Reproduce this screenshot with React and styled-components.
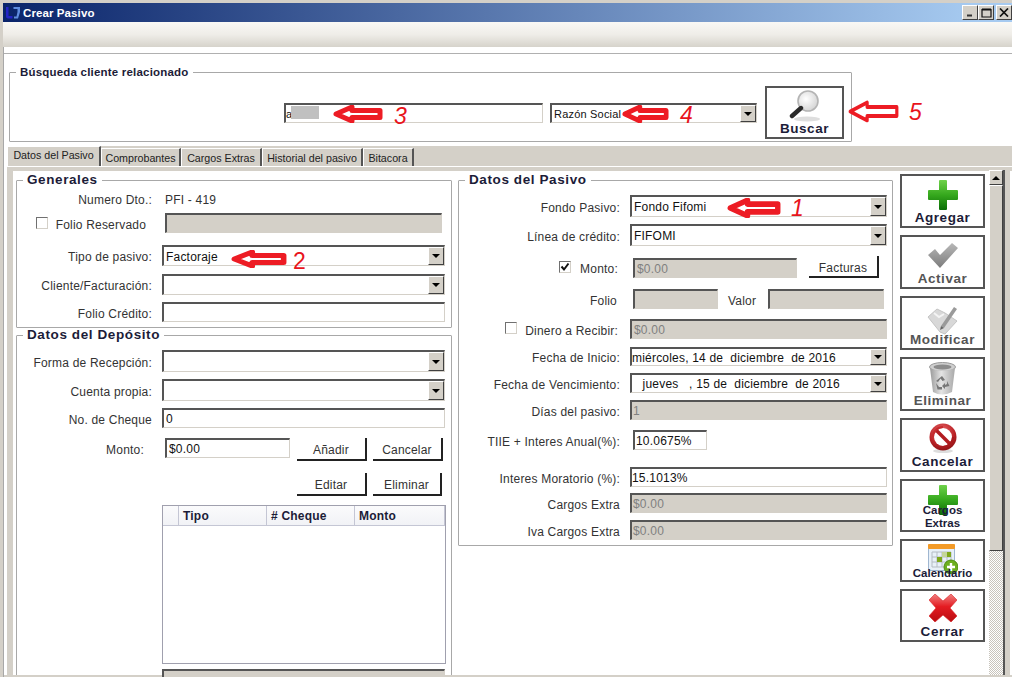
import React from "react";
import styled, { createGlobalStyle } from "styled-components";

const GlobalStyle = createGlobalStyle`
  html, body {
    margin: 0;
    padding: 0;
    background: #fff;
  }
  * {
    box-sizing: border-box;
  }
`;

const Window = styled.div`
  position: relative;
  width: 1012px;
  height: 677px;
  overflow: hidden;
  display: flex;
  flex-direction: column;
  padding-top: 3px;
  background: #d4d0c8;
  font-family: "Liberation Sans", Arial, sans-serif;
  font-size: 12px;
  letter-spacing: 0.2px;
  color: #333;
`;

const TitleBar = styled.div`
  flex: none;
  height: 19px;
  margin-left: 3px;
  display: flex;
  align-items: center;
  padding-left: 2px;
  background: linear-gradient(90deg, #0a246a 0%, #a6caf0 96%);
`;

const TitleText = styled.span`
  margin-left: 2px;
  color: #fff;
  font-weight: bold;
  font-size: 11.5px;
  letter-spacing: 0.1px;
`;

const WindowControls = styled.div`
  margin-left: auto;
  display: flex;
  align-items: center;
  height: 15px;
`;

const ControlButton = styled.div`
  width: 16px;
  height: 15px;
  margin-left: ${(p) => p.$ml || 0}px;
  display: flex;
  align-items: center;
  justify-content: center;
  background: #d4d0c8;
  border: 1px solid;
  border-color: #fff #404040 #404040 #fff;
`;

const Toolbar = styled.div`
  flex: none;
  height: 25px;
  margin-left: 3px;
  background: linear-gradient(180deg, #f9f8f5 0%, #efede8 50%, #d6d3cb 100%);
`;

const Client = styled.div`
  flex: 1;
  min-height: 0;
  margin-left: 3px;
  display: flex;
  flex-direction: column;
  background: #fff;
  border-left: 1px solid #a8a8a8;
`;

const TopRule = styled.div`
  flex: none;
  height: 7px;
  border-bottom: 1px solid #b0b0b0;
`;

const SearchSection = styled.div`
  flex: none;
  height: 92px;
  padding: 11px 0 0 5px;
`;

const Group = styled.fieldset`
  margin: 0;
  padding: 0;
  width: ${(p) => p.$w}px;
  height: ${(p) => p.$h}px;
  min-width: 0;
  border: 1px solid #a8a8a8;
  border-radius: 1px;
  flex: none;
`;

const Legend = styled.legend`
  margin-left: 6px;
  padding: 0 4px;
  height: 14px;
  line-height: 14px;
  font-weight: bold;
  font-size: ${(p) => p.$size || 13.5}px;
  letter-spacing: ${(p) => p.$ls || 0.6}px;
  color: #1c1c38;
`;

const SearchRow = styled.div`
  display: flex;
  align-items: flex-start;
  padding: 7px 0 0 274px;
`;

const Field = styled.div`
  position: relative;
  flex: none;
  width: ${(p) => p.$w}px;
  height: ${(p) => p.$h || 20}px;
  margin-left: ${(p) => p.$ml || 0}px;
  margin-top: ${(p) => p.$mt || 0}px;
  display: flex;
  align-items: center;
  padding: 1px 0 0 ${(p) => p.$pl ?? 2}px;
  white-space: pre;
  overflow: hidden;
  font-size: ${(p) => p.$size || 12}px;
  color: ${(p) => (p.$off ? "#808080" : "#111")};
  background: ${(p) => (p.$off ? "#d4d0c8" : "#fff")};
  border-style: solid;
  border-width: 2px 1px 1px 2px;
  border-color: #555 #d4d0c8 #d4d0c8 #555;
`;

const Redacted = styled.span`
  width: 28px;
  height: 13px;
  margin: -3px 0 0 -1px;
  background: #c0c0c0;
`;

const DropButton = styled.div`
  position: absolute;
  top: 0;
  right: 0;
  bottom: 0;
  width: 16px;
  display: flex;
  align-items: center;
  justify-content: center;
  background: #d4d0c8;
  border: 1px solid;
  border-color: #fff #404040 #404040 #fff;

  &::after {
    content: "";
    border-style: solid;
    border-width: 4px 4px 0 4px;
    border-color: #000 transparent transparent transparent;
  }
`;

const ActionButton = styled.div`
  flex: none;
  width: ${(p) => p.$w || 85}px;
  height: ${(p) => p.$h}px;
  margin-left: ${(p) => p.$ml || 0}px;
  display: flex;
  flex-direction: column;
  align-items: center;
  padding-top: ${(p) => p.$pt || 4}px;
  background: #fff;
  border: 2px solid #555;
  font-weight: bold;
  font-size: 13.5px;
  letter-spacing: 0.55px;
  line-height: 13px;
  text-align: center;
  color: ${(p) => (p.$off ? "#555" : "#1c1c38")};
`;

const ActionLabel = styled.span`
  position: relative;
  margin-top: ${(p) => p.$mt || 0}px;
  font-size: ${(p) => p.$size || 13.5}px;
  letter-spacing: ${(p) => (p.$size ? 0 : 0.55)}px;
`;

const TabArea = styled.div`
  flex: 1;
  min-height: 0;
  margin-left: 3px;
  display: flex;
  flex-direction: column;
  background: #d4d0c8;
`;

const TabStrip = styled.div`
  flex: none;
  height: 21px;
  display: flex;
  align-items: flex-end;
  border-bottom: 1px solid #fff;
`;

const Tab = styled.div`
  flex: none;
  width: ${(p) => p.$w}px;
  height: ${(p) => (p.$active ? 20 : 18)}px;
  padding: ${(p) => (p.$active ? "0 0 3px 0" : "1px 0 0 0")};
  display: flex;
  align-items: center;
  justify-content: center;
  white-space: nowrap;
  background: #d4d0c8;
  color: #222;
  font-size: 10.7px;
  letter-spacing: 0;
  border-style: solid;
  border-width: 1px 2px 0 1px;
  border-color: #fff #555 #fff #fff;
`;

const TabBody = styled.div`
  flex: 1;
  min-height: 0;
  margin-top: 4px;
  margin-left: 6px;
  display: flex;
  background: #fff;
`;

const Columns = styled.div`
  flex: none;
  display: flex;
  align-items: flex-start;
  padding: 2px 0 0 3px;
`;

const LeftColumn = styled.div`
  flex: none;
  width: 436px;
  margin-right: 6px;
  display: flex;
  flex-direction: column;
`;

const ButtonColumn = styled.div`
  flex: none;
  width: 85px;
  margin-left: 7px;
  padding-top: 1px;
  display: flex;
  flex-direction: column;
  gap: 7px;
`;

const Row = styled.div`
  display: flex;
  align-items: ${(p) => (p.$start ? "flex-start" : "center")};
  height: ${(p) => p.$h || 20}px;
  margin-top: ${(p) => p.$mt || 0}px;
`;

const Label = styled.div`
  flex: none;
  width: ${(p) => p.$w}px;
  display: flex;
  align-items: center;
  justify-content: flex-end;
  white-space: nowrap;
  padding-top: ${(p) => p.$pt ?? 3}px;
  padding-right: ${(p) => p.$pr || 0}px;
`;

const Check = styled.span`
  flex: none;
  width: 12px;
  height: 12px;
  margin-right: ${(p) => p.$mr || 8}px;
  margin-top: -5px;
  display: flex;
  align-items: center;
  justify-content: center;
  background: #fff;
  border-style: solid;
  border-width: 1px;
  border-color: #707070 #d4d0c8 #d4d0c8 #707070;
`;

const PlainValue = styled.span`
  margin-left: ${(p) => p.$ml || 0}px;
  padding-top: ${(p) => p.$pt || 0}px;
  flex: none;
`;

const FlatButton = styled.div`
  flex: none;
  width: ${(p) => p.$w || 70}px;
  height: ${(p) => p.$h || 23}px;
  margin-left: ${(p) => p.$ml || 0}px;
  margin-top: ${(p) => p.$mt || 0}px;
  display: flex;
  align-items: center;
  justify-content: center;
  padding-top: 3px;
  background: #fff;
  border-style: solid;
  border-width: 0 2px 2px 0;
  border-color: #222;
`;

const DepositGrid = styled.div`
  width: 284px;
  height: 159px;
  margin: 9px 0 0 145px;
  border: 1px solid #a0a0ae;
`;

const GridHead = styled.div`
  display: grid;
  grid-template-columns: 16px 88px 88px 90px;
  height: 20px;
  background: linear-gradient(180deg, #fbfbfc 0%, #f1f2f6 100%);
  border-bottom: 1px solid #c4c6d4;
`;

const GridCol = styled.div`
  display: flex;
  align-items: center;
  padding-left: 4px;
  border-right: 1px solid #c4c6d4;
  font-weight: bold;
  font-size: 12px;
  color: #1c1c38;
`;

const BottomField = styled(Field)`
  margin-top: 5px;
  margin-left: 145px;
`;

const ScrollBar = styled.div`
  flex: none;
  width: 16px;
  margin: -1px 0 0 4px;
  display: flex;
  flex-direction: column;
  border-right: 2px solid #555;
  background: repeating-conic-gradient(#c8c4bc 0 25%, #fff 0 50%) 0 0 / 2px 2px;
`;

const ScrollArrow = styled.div`
  flex: none;
  height: 15px;
  display: flex;
  align-items: center;
  justify-content: center;
  background: #d4d0c8;
  border: 1px solid;
  border-color: #fff #404040 #404040 #fff;

  &::after {
    content: "";
    border-style: solid;
    border-width: 0 4px 4px 4px;
    border-color: transparent transparent #000 transparent;
  }
`;

const ScrollThumb = styled.div`
  flex: none;
  height: 366px;
  background: #d4d0c8;
  border: 1px solid;
  border-color: #fff #404040 #404040 #fff;
`;

const EdgeStrip = styled.div`
  flex: 1;
  background: #d4d0c8;
  border-right: 2px solid #fff;
`;

const BottomLine = styled.div`
  flex: none;
  height: 2px;
  background: #d4d0c8;
`;

/* red annotations drawn on top of the capture */
const Mark = styled.svg`
  position: absolute;
  left: ${(p) => p.$x}px;
  top: ${(p) => p.$y}px;
`;

const MarkNumber = styled.span`
  position: absolute;
  left: ${(p) => p.$x}px;
  top: ${(p) => p.$y}px;
  font-size: 23px;
  line-height: 23px;
  font-style: ${(p) => (p.$upright ? "normal" : "italic")};
  letter-spacing: 0;
  color: #e8141c;
`;

const Arrow = ({ x, y, w, h, thin }) => (
  <Mark $x={x} $y={y} width={w} height={h} viewBox="0 0 50 18" preserveAspectRatio="none">
    <path
      d="M3 9 L19 2 L19 5.5 L47 5.5 L47 12.5 L19 12.5 L19 16 Z"
      fill="#fff"
      stroke="#ed1c24"
      strokeWidth={thin ? 3 : 5}
      strokeLinejoin="round"
    />
  </Mark>
);

const Shared = () => (
  <svg width="0" height="0" style={{ position: "absolute" }}>
    <defs>
      <linearGradient id="plusGreen" x1="0" y1="0" x2="0" y2="1">
        <stop offset="0" stopColor="#6fd24a" />
        <stop offset="0.5" stopColor="#35a81d" />
        <stop offset="1" stopColor="#0b6d06" />
      </linearGradient>
      <linearGradient id="grayMetal" x1="0" y1="0" x2="0" y2="1">
        <stop offset="0" stopColor="#b8b8b8" />
        <stop offset="1" stopColor="#7c7c7c" />
      </linearGradient>
      <linearGradient id="binBody" x1="0" y1="0" x2="1" y2="0">
        <stop offset="0" stopColor="#9a9a9a" />
        <stop offset="0.45" stopColor="#e4e4e4" />
        <stop offset="1" stopColor="#a8a8a8" />
      </linearGradient>
      <radialGradient id="redBall" cx="0.45" cy="0.3" r="0.8">
        <stop offset="0" stopColor="#e8686a" />
        <stop offset="0.6" stopColor="#bb2226" />
        <stop offset="1" stopColor="#7c0d10" />
      </radialGradient>
      <linearGradient id="redCross" x1="0" y1="0" x2="0" y2="1">
        <stop offset="0" stopColor="#f08080" />
        <stop offset="0.45" stopColor="#e41c22" />
        <stop offset="1" stopColor="#b80c10" />
      </linearGradient>
      <radialGradient id="lens" cx="0.4" cy="0.4" r="0.7">
        <stop offset="0" stopColor="#ffffff" />
        <stop offset="1" stopColor="#d0d0d0" />
      </radialGradient>
    </defs>
  </svg>
);

const PlusIcon = () => (
  <svg width="30" height="30" viewBox="0 0 30 30">
    <path
      d="M11 1 Q11 0 12 0 L18 0 Q19 0 19 1 L19 10 L29 10 Q30 10 30 11 L30 19 Q30 20 29 20 L19 20 L19 29 Q19 30 18 30 L12 30 Q11 30 11 29 L11 20 L1 20 Q0 20 0 19 L0 11 Q0 10 1 10 L11 10 Z"
      fill="url(#plusGreen)"
    />
  </svg>
);

const CheckIcon = () => (
  <svg width="30" height="26" viewBox="0 0 30 26">
    <path d="M0 12 L7 6 L12 12 L24 0 L30 5 L12 25 Z" fill="url(#grayMetal)" />
  </svg>
);

const EditIcon = () => (
  <svg width="32" height="31" viewBox="0 0 32 31">
    <path d="M1 13 L10 5 L18 9 L30 17 L18 30 L13 28 Z" fill="#d8d8d8" stroke="#c4c4c4" />
    <path d="M7 9 L12 13 L17 10" fill="none" stroke="#f4f4f4" strokeWidth="2" />
    <path d="M14 22 L27 3 L30 5 L17 24 Z" fill="#9a9a9a" />
    <path d="M14 22 L17 24 L13 26 Z" fill="#666" />
  </svg>
);

const TrashIcon = () => (
  <svg width="27" height="33" viewBox="0 0 27 33">
    <ellipse cx="13.5" cy="5" rx="13" ry="4.5" fill="#cfcfcf" stroke="#999" />
    <ellipse cx="13.5" cy="5" rx="9" ry="2.4" fill="#8c8c8c" />
    <path d="M1 6 L4 30 Q13 35 23 30 L26 6 Q13 12 1 6 Z" fill="url(#binBody)" />
    <path
      d="M13 14 L16 18 L13.5 19 L11.5 16.5 L9 20 L7 19 Z M18 19 L20.5 24 L16 25 L16 27 L13 24 L16 21 L16 23 L18 22 Z M7 21 L10 25 L13 25 L13 27.5 L8.5 27.5 Z"
      fill="#777"
    />
  </svg>
);

const CancelIcon = () => (
  <svg width="28" height="30" viewBox="0 0 28 30">
    <ellipse cx="14" cy="28" rx="10" ry="2" fill="#ddd" />
    <circle cx="14" cy="14" r="13.5" fill="url(#redBall)" />
    <circle cx="14" cy="14" r="9" fill="#fff" />
    <path d="M8 5.5 L22.5 20 L20 22.5 L5.5 8 Z" fill="#b21c20" />
    <path d="M14 23 A9 9 0 0 0 23 14 L25 14 A11 11 0 0 1 14 25 Z" fill="#a81a1e" />
    <path d="M3 14 A11 11 0 0 1 14 3 L14 5 A9 9 0 0 0 5 14 Z" fill="#c42a2e" />
  </svg>
);

const CalendarIcon = () => (
  <svg width="30" height="30" viewBox="0 0 30 30">
    <rect x="0.5" y="0.5" width="26" height="26" rx="1" fill="#e8f0f8" stroke="#9fb6d0" />
    <rect x="0" y="0" width="27" height="5" rx="1" fill="#f39a26" />
    <path
      d="M4 8 H23 M4 13 H23 M4 18 H23 M4 23 H23 M4 8 V23 M9 8 V23 M14 8 V23 M19 8 V23 M23 8 V23"
      stroke="#b4bcc4"
      strokeWidth="1"
      fill="none"
    />
    <rect x="9" y="13" width="5" height="5" fill="#7fa81c" />
    <rect x="19" y="8" width="4" height="5" fill="#7fa81c" />
    <rect x="14" y="8" width="5" height="5" fill="#c4d69a" />
    <circle cx="23" cy="23" r="7" fill="#6cae1e" stroke="#4c8c10" />
    <path d="M23 19 V27 M19 23 H27" stroke="#fff" strokeWidth="2.4" />
  </svg>
);

const CloseIcon = () => (
  <svg width="28" height="28" viewBox="0 0 28 28">
    <path
      d="M6 0 L14 7 L22 0 L28 6 L21 14 L28 22 L22 28 L14 21 L6 28 L0 22 L7 14 L0 6 Z"
      fill="url(#redCross)"
      stroke="#d82024"
      strokeWidth="0.6"
      strokeLinejoin="round"
    />
  </svg>
);

const SearchIcon = () => (
  <svg width="32" height="32" viewBox="0 0 32 32">
    <ellipse cx="18" cy="29" rx="13" ry="2.6" fill="#dedede" />
    <circle cx="19" cy="11" r="10" fill="url(#lens)" stroke="#b4b4b4" strokeWidth="1.6" />
    <path d="M12 18 L3 26" stroke="#2a2a2a" strokeWidth="4.4" strokeLinecap="round" />
  </svg>
);

const AppLogo = () => (
  <svg width="16" height="13" viewBox="0 0 16 13">
    <path d="M1 1 H3.5 V10 H7.5 V12.5 H3 Q1 12.5 1 10.5 Z" fill="#2424c8" />
    <path d="M8.5 1 H15 V6 L13 12.5 H9 V10.5 H11.5 L12.5 6 V3 H8.5 Z" fill="#5f8de0" />
  </svg>
);

const Combo = ({ w, h, ml, mt, size, pl, children }) => (
  <Field $w={w} $h={h} $ml={ml} $mt={mt} $size={size} $pl={pl}>
    {children}
    <DropButton />
  </Field>
);

const CheckMark = () => (
  <svg width="10" height="10" viewBox="0 0 10 10">
    <path d="M1.5 4.5 L4 7.5 L8.5 1.5" fill="none" stroke="#111" strokeWidth="2" />
  </svg>
);

const App = () => (
  <Window>
    <GlobalStyle />
    <Shared />

    <TitleBar>
      <AppLogo />
      <TitleText>Crear Pasivo</TitleText>
      <WindowControls>
        <ControlButton>
          <svg width="10" height="9" viewBox="0 0 10 9">
            <path d="M2 7.5 H7" stroke="#333" strokeWidth="2" />
          </svg>
        </ControlButton>
        <ControlButton>
          <svg width="11" height="10" viewBox="0 0 11 10">
            <path d="M1 1.5 H10 V9 H1 Z" fill="none" stroke="#111" strokeWidth="1.2" />
            <path d="M1 1.5 H10" stroke="#111" strokeWidth="2" />
          </svg>
        </ControlButton>
        <ControlButton $ml={2}>
          <svg width="10" height="9" viewBox="0 0 10 9">
            <path d="M1 0.5 L9 8.5 M9 0.5 L1 8.5" stroke="#111" strokeWidth="1.7" />
          </svg>
        </ControlButton>
      </WindowControls>
    </TitleBar>

    <Toolbar />

    <Client>
      <TopRule />

      <SearchSection>
        <Group $w={843} $h={77}>
          <Legend $size={11.5} $ls={0.2}>Búsqueda cliente relacionado</Legend>
          <SearchRow>
            <Field $w={259} $mt={17} $pl={0} $size={11}>
              a
              <Redacted />
            </Field>
            <Combo w={207} ml={7} mt={17} size={11}>Razón Social</Combo>
            <ActionButton $w={79} $h={53} $ml={8} $pt={2}>
              <SearchIcon />
              <ActionLabel>Buscar</ActionLabel>
            </ActionButton>
          </SearchRow>
        </Group>
      </SearchSection>

      <TabArea>
        <TabStrip>
          <Tab $active $w={94}>Datos del Pasivo</Tab>
          <Tab $w={80}>Comprobantes</Tab>
          <Tab $w={81}>Cargos Extras</Tab>
          <Tab $w={101}>Historial del pasivo</Tab>
          <Tab $w={51}>Bitacora</Tab>
        </TabStrip>

        <TabBody>
          <Columns>
            <LeftColumn>
              <Group $w={436} $h={155}>
                <Legend>Generales</Legend>
                <Row $h={14} $mt={6}>
                  <Label $w={135} $pt={0}>Numero Dto.:</Label>
                  <PlainValue $ml={13}>PFI - 419</PlainValue>
                </Row>
                <Row $mt={6}>
                  <Label $w={135} $pr={6} $pt={4}>
                    <Check />
                    Folio Reservado
                  </Label>
                  <Field $off $w={277} $ml={13} />
                </Row>
                <Row $h={21} $mt={12}>
                  <Label $w={135}>Tipo de pasivo:</Label>
                  <Combo w={283} h={21} ml={10}>Factoraje</Combo>
                </Row>
                <Row $h={21} $mt={8}>
                  <Label $w={135}>Cliente/Facturación:</Label>
                  <Combo w={283} h={21} ml={10} />
                </Row>
                <Row $mt={7}>
                  <Label $w={135} $pt={4}>Folio Crédito:</Label>
                  <Field $w={283} $ml={10} />
                </Row>
              </Group>

              <Group $w={436} $h={360}>
                <Legend>Datos del Depósito</Legend>
                <Row $h={22} $mt={8}>
                  <Label $w={135} $pt={4}>Forma de Recepción:</Label>
                  <Combo w={283} h={22} ml={10} />
                </Row>
                <Row $h={22} $mt={7}>
                  <Label $w={135} $pt={4}>Cuenta propia:</Label>
                  <Combo w={283} h={22} ml={10} />
                </Row>
                <Row $mt={7}>
                  <Label $w={135} $pt={4}>No. de Cheque</Label>
                  <Field $w={283} $ml={10}>0</Field>
                </Row>
                <Row $h={23} $mt={10} $start>
                  <Label $w={127} $pt={5}>Monto:</Label>
                  <Field $w={125} $ml={21}>$0.00</Field>
                  <FlatButton $ml={7}>Añadir</FlatButton>
                  <FlatButton $ml={6}>Cancelar</FlatButton>
                </Row>
                <Row $h={23} $mt={12} $start>
                  <FlatButton $ml={280}>Editar</FlatButton>
                  <FlatButton $ml={6} $w={69}>Eliminar</FlatButton>
                </Row>
                <DepositGrid>
                  <GridHead>
                    <GridCol />
                    <GridCol>Tipo</GridCol>
                    <GridCol># Cheque</GridCol>
                    <GridCol>Monto</GridCol>
                  </GridHead>
                </DepositGrid>
                <BottomField $off $w={283} />
              </Group>
            </LeftColumn>

            <Group $w={435} $h={373}>
              <Legend>Datos del Pasivo</Legend>
              <Row $h={22} $mt={8}>
                <Label $w={161}>Fondo Pasivo:</Label>
                <Combo w={257} h={22} ml={10}>Fondo Fifomi</Combo>
              </Row>
              <Row $h={22} $mt={7}>
                <Label $w={161}>Línea de crédito:</Label>
                <Combo w={257} h={22} ml={10}>FIFOMI</Combo>
              </Row>
              <Row $h={21} $mt={11}>
                <Label $w={161} $pr={2}>
                  <Check $mr={9}>
                    <CheckMark />
                  </Check>
                  Monto:
                </Label>
                <Field $off $w={164} $ml={13}>$0.00</Field>
                <FlatButton $ml={12} $h={22} $mt={-1}>Facturas</FlatButton>
              </Row>
              <Row $mt={11}>
                <Label $w={158} $pt={4}>Folio</Label>
                <Field $off $w={85} $ml={16} />
                <PlainValue $ml={10} $pt={4}>Valor</PlainValue>
                <Field $off $w={116} $ml={12} />
              </Row>
              <Row $mt={10}>
                <Label $w={161} $pr={2}>
                  <Check />
                  Dinero a Recibir:
                </Label>
                <Field $off $w={257} $ml={10}>$0.00</Field>
              </Row>
              <Row $h={19} $mt={8}>
                <Label $w={161}>Fecha de Inicio:</Label>
                <Combo w={257} h={19} ml={10} pl={0}>miércoles, 14 de  diciembre  de 2016</Combo>
              </Row>
              <Row $mt={7}>
                <Label $w={161}>Fecha de Vencimiento:</Label>
                <Combo w={257} ml={10} pl={0}>{"   jueves   , 15 de  diciembre  de 2016"}</Combo>
              </Row>
              <Row $mt={7}>
                <Label $w={161} $pt={4}>Días del pasivo:</Label>
                <Field $off $w={257} $ml={10} $pl={1}>1</Field>
              </Row>
              <Row $mt={10}>
                <Label $w={161} $pt={4}>TIIE + Interes Anual(%):</Label>
                <Field $w={74} $ml={13} $pl={1}>10.0675%</Field>
              </Row>
              <Row $mt={17}>
                <Label $w={161}>Interes Moratorio (%):</Label>
                <Field $w={257} $ml={10} $pl={0}>15.1013%</Field>
              </Row>
              <Row $mt={6}>
                <Label $w={161} $pt={4}>Cargos Extra</Label>
                <Field $off $w={257} $ml={10} $pl={1}>$0.00</Field>
              </Row>
              <Row $mt={7}>
                <Label $w={161} $pt={4}>Iva Cargos Extra</Label>
                <Field $off $w={257} $ml={10} $pl={1}>$0.00</Field>
              </Row>
            </Group>

            <ButtonColumn>
              <ActionButton $h={54}>
                <PlusIcon />
                <ActionLabel $mt={1}>Agregar</ActionLabel>
              </ActionButton>
              <ActionButton $h={54} $off $pt={6}>
                <CheckIcon />
                <ActionLabel $mt={3}>Activar</ActionLabel>
              </ActionButton>
              <ActionButton $h={54} $off $pt={6}>
                <EditIcon />
                <ActionLabel $mt={-2}>Modificar</ActionLabel>
              </ActionButton>
              <ActionButton $h={54} $off $pt={3}>
                <TrashIcon />
                <ActionLabel $mt={-1}>Eliminar</ActionLabel>
              </ActionButton>
              <ActionButton $h={54} $pt={3}>
                <CancelIcon />
                <ActionLabel $mt={2}>Cancelar</ActionLabel>
              </ActionButton>
              <ActionButton $h={53} $pt={4}>
                <PlusIcon />
                <ActionLabel $mt={-11} $size={11.5}>Cargos<br />Extras</ActionLabel>
              </ActionButton>
              <ActionButton $h={43} $pt={3}>
                <CalendarIcon />
                <ActionLabel $mt={-7} $size={11.5}>Calendario</ActionLabel>
              </ActionButton>
              <ActionButton $h={53} $pt={3}>
                <CloseIcon />
                <ActionLabel $mt={3}>Cerrar</ActionLabel>
              </ActionButton>
            </ButtonColumn>
          </Columns>

          <ScrollBar>
            <ScrollArrow />
            <ScrollThumb />
          </ScrollBar>
          <EdgeStrip />
        </TabBody>
      </TabArea>
      <BottomLine />
    </Client>

    <Arrow x={727} y={198} w={54} h={20} />
    <MarkNumber $x={791} $y={197}>1</MarkNumber>
    <Arrow x={231} y={250} w={56} h={18} />
    <MarkNumber $x={293} $y={250} $upright>2</MarkNumber>
    <Arrow x={333} y={105} w={50} h={18} />
    <MarkNumber $x={394} $y={105}>3</MarkNumber>
    <Arrow x={622} y={105} w={47} h={18} />
    <MarkNumber $x={680} $y={104}>4</MarkNumber>
    <Arrow x={847} y={100} w={53} h={23} thin />
    <MarkNumber $x={909} $y={101}>5</MarkNumber>
  </Window>
);

export default App;
